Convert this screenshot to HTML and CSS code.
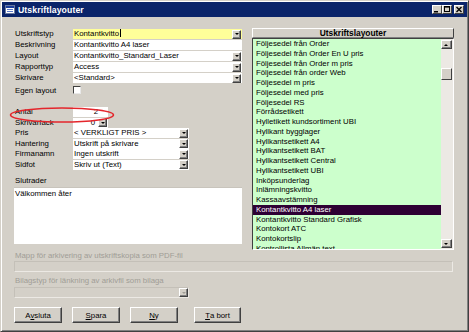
FILE: index.html
```html
<!DOCTYPE html>
<html lang="sv">
<head>
<meta charset="utf-8">
<title>Utskriftlayouter</title>
<link rel="stylesheet" href="styles.css">
</head>
<body>
<div class="window">
  <div class="titlebar">
    <svg class="app-icon" width="10" height="9" viewBox="0 0 10 9">
      <rect x="0.5" y="0.5" width="9" height="8" fill="#fff" stroke="#6a7aa0"/>
      <rect x="1" y="1" width="8" height="2" fill="#1c3f9c"/>
      <rect x="2" y="4" width="6" height="1" fill="#5a78c8"/>
      <rect x="2" y="6" width="6" height="1" fill="#5a78c8"/>
    </svg>
    <span class="title">Utskriftlayouter</span>
    <div class="caption-btns">
      <span class="cbtn"><svg width="8" height="7" viewBox="0 0 8 7"><rect x="1" y="5" width="4" height="1.5" fill="#000"/></svg></span>
      <span class="cbtn"><svg width="8" height="7" viewBox="0 0 8 7"><rect x="1.5" y="0.5" width="5" height="5" fill="none" stroke="#000"/><rect x="1" y="0" width="6" height="1.6" fill="#000"/></svg></span>
      <span class="cbtn close"><svg width="8" height="7" viewBox="0 0 8 7"><path d="M1.5 1 L6.5 6 M6.5 1 L1.5 6" stroke="#000" stroke-width="1.4"/></svg></span>
    </div>
  </div>

  <div class="client">
    <div class="top">
      <div class="left">
        <div class="group upper">
          <div class="row"><span class="label">Utskriftstyp</span><span class="field yellow"><span class="val">Kontantkvitto<span class="caret"></span></span><span class="dd"></span></span></div>
          <div class="row"><span class="label">Beskrivning</span><span class="field"><span class="val">Kontantkvitto A4 laser</span></span></div>
          <div class="row"><span class="label">Layout</span><span class="field"><span class="val">Kontantkvitto_Standard_Laser</span><span class="dd"></span></span></div>
          <div class="row"><span class="label">Rapporttyp</span><span class="field"><span class="val">Access</span><span class="dd"></span></span></div>
          <div class="row"><span class="label">Skrivare</span><span class="field"><span class="val">&lt;Standard&gt;</span><span class="dd"></span></span></div>
          <div class="row check-row"><span class="label">Egen layout</span><span class="checkbox"></span></div>
        </div>

        <div class="group lower">
          <div class="row"><span class="label">Antal</span><span class="field narrow num"><span class="val">2</span></span></div>
          <div class="row"><span class="label">Skrivarfack</span><span class="field narrow num combo-num"><span class="val">0</span><span class="dd"></span></span></div>
          <div class="row"><span class="label">Pris</span><span class="field medium"><span class="val">&lt; VERKLIGT PRIS &gt;</span><span class="dd"></span></span></div>
          <div class="row"><span class="label">Hantering</span><span class="field medium"><span class="val">Utskrift på skrivare</span><span class="dd"></span></span></div>
          <div class="row"><span class="label">Firmanamn</span><span class="field medium"><span class="val">Ingen utskrift</span><span class="dd"></span></span></div>
          <div class="row"><span class="label">Sidfot</span><span class="field medium"><span class="val">Skriv ut (Text)</span><span class="dd"></span></span></div>
        </div>

        <div class="slut-label">Slutrader</div>
        <div class="textarea">Välkommen åter</div>
      </div>

      <div class="right">
        <div class="list-header">Utskriftslayouter</div>
        <div class="list">
          <ul class="items">
            <li>Följesedel från Order</li>
            <li>Följesedel från Order En U pris</li>
            <li>Följesedel från Order m pris</li>
            <li>Följesedel från order Web</li>
            <li>Följesedel m pris</li>
            <li>Följesedel med pris</li>
            <li>Följesedel RS</li>
            <li>Förrådsetikett</li>
            <li>Hylletikett kundsortiment UBI</li>
            <li>Hyllkant bygglager</li>
            <li>Hyllkantsetikett A4</li>
            <li>Hyllkantsetikett BAT</li>
            <li>Hyllkantsetikett Central</li>
            <li>Hyllkantsetikett UBI</li>
            <li>Inköpsunderlag</li>
            <li>Inlämningskvitto</li>
            <li>Kassaavstämning</li>
            <li class="selected">Kontantkvitto A4 laser</li>
            <li>Kontantkvitto Standard Grafisk</li>
            <li>Kontokort ATC</li>
            <li>Kontokortslip</li>
            <li>Kontrollista Allmän text</li>
          </ul>
          <div class="scrollbar">
            <span class="sb-btn"><span class="tri up"></span></span>
            <span class="sb-track"><span class="sb-thumb"></span></span>
            <span class="sb-btn"><span class="tri"></span></span>
          </div>
        </div>
      </div>
    </div>

    <div class="dis-label first">Mapp för arkivering av utskriftskopia som PDF-fil</div>
    <div class="dis-field wide"></div>
    <div class="dis-label">Bilagstyp för länkning av arkivfil som bilaga</div>
    <div class="dis-field short"><span class="dd"></span></div>

    <div class="buttons">
      <span class="btn">A<u>v</u>sluta</span>
      <span class="btn"><u>S</u>para</span>
      <span class="btn"><u>N</u>y</span>
      <span class="btn last"><u>T</u>a bort</span>
    </div>
  </div>

  <svg class="highlight" width="108" height="18" viewBox="0 0 108 18">
    <ellipse cx="54" cy="9" rx="51.5" ry="7" fill="none" stroke="#e4262c" stroke-width="1.5"/>
  </svg>
</div>
</body>
</html>
```
FILE: styles.css
```css
html, body {
  margin: 0;
  padding: 0;
  background: #d4d0c8;
}

.window {
  position: relative;
  width: 469px;
  height: 332px;
  box-sizing: border-box;
  border: 1px solid;
  border-color: #d4d0c8 #404040 #404040 #d4d0c8;
  box-shadow: inset 1px 1px #ffffff, inset -1px -1px #808080;
  padding: 1px;
  background: #d4d0c8;
  display: flex;
  flex-direction: column;
  overflow: hidden;
  font-family: "Liberation Sans", Arial, sans-serif;
  font-size: 7.8px;
  color: #000;
}

/* Title bar */
.titlebar {
  height: 15px;
  flex: none;
  background: #0a246a;
  display: flex;
  align-items: center;
  padding: 0 2px 0 2px;
  color: #fff;
}
.app-icon {
  margin-left: 1px;
  margin-right: 3px;
  flex: none;
}
.title {
  font-weight: bold;
  font-size: 8.7px;
  letter-spacing: 0.1px;
}
.caption-btns {
  margin-left: auto;
  display: flex;
  margin-right: 1px;
}
.cbtn {
  width: 10px;
  height: 9px;
  box-sizing: border-box;
  background: #d4d0c8;
  border: 1px solid;
  border-color: #fff #404040 #404040 #fff;
  display: flex;
  align-items: center;
  justify-content: center;
}
.cbtn svg { display: block; }
.cbtn.close { margin-left: 2px; }

/* Client */
.client {
  flex: 1;
  padding: 11px 0 0 12px;
  display: flex;
  flex-direction: column;
}
.top {
  display: flex;
  gap: 10px;
  height: 222px;
}

.left {
  width: 228px;
  padding-top: 1px;
  display: flex;
  flex-direction: column;
}

.row {
  display: flex;
  align-items: center;
  height: 10px;
  line-height: 10px;
}
.upper .row { margin-bottom: 1px; }
.upper .check-row { margin-top: 3px; }
.lower { margin-top: 10px; }
.lower .row { margin-bottom: 0.5px; }

.label {
  width: 58px;
  padding-left: 1px;
  flex: none;
  white-space: nowrap;
}

.field {
  flex: none;
  width: 169px;
  height: 10px;
  box-sizing: border-box;
  background: #fff;
  display: flex;
  align-items: center;
  padding-left: 1px;
  white-space: nowrap;
  overflow: hidden;
}
.field.yellow { background: #ffff99; }
.field .val { flex: 1; }
.field.narrow { width: 35px; }
.field.medium { width: 116px; }
.field.num .val { text-align: right; padding-right: 10px; }
.field.combo-num .val { padding-right: 3px; }

.caret {
  display: inline-block;
  width: 1px;
  height: 8px;
  background: #000;
  vertical-align: -1px;
  margin-left: 0.5px;
}

.dd {
  flex: none;
  position: relative;
  width: 9px;
  height: 9px;
  box-sizing: border-box;
  background: #d4d0c8;
  border: 1px solid;
  border-color: #fff #404040 #404040 #fff;
  box-shadow: inset -1px -1px #808080;
  margin-right: 1px;
}
.dd::after {
  content: "";
  position: absolute;
  left: 1.5px;
  top: 2.5px;
  border-left: 2.5px solid transparent;
  border-right: 2.5px solid transparent;
  border-top: 2.5px solid #000;
}

.checkbox {
  width: 8px;
  height: 8px;
  box-sizing: border-box;
  background: #fff;
  border: 1px solid;
  border-color: #404040 #e8e8e8 #e8e8e8 #404040;
  margin-top: -2px;
}

.slut-label {
  margin-top: 5.5px;
  height: 10px;
  line-height: 10px;
  padding-left: 1px;
}
.textarea {
  margin-top: 1px;
  width: 228px;
  height: 57px;
  box-sizing: border-box;
  background: #fff;
  border-top: 1px solid #c8c4bc;
  padding: 1px 1px;
  line-height: 9px;
}

/* Right list */
.right {
  width: 202px;
  display: flex;
  flex-direction: column;
}
.list-header {
  height: 10px;
  box-sizing: border-box;
  background: #d4d0c8;
  border: 1px solid;
  border-color: #fff #404040 #808080 #fff;
  font-weight: bold;
  font-size: 8.4px;
  line-height: 8px;
  text-align: center;
}
.list {
  height: 212px;
  width: 202px;
  box-sizing: border-box;
  border: 1px solid;
  border-color: #404040 #fff #fff #404040;
  background: #ccffcc;
  display: flex;
  overflow: hidden;
}
.items {
  list-style: none;
  margin: 0;
  padding: 0;
  flex: 1;
  overflow: hidden;
}
.items li {
  height: 9.76px;
  line-height: 9.76px;
  padding-left: 3px;
  white-space: nowrap;
}
.items li.selected {
  background: #2e0034;
  color: #fff;
}

.scrollbar {
  width: 11px;
  flex: none;
  display: flex;
  flex-direction: column;
  background: #ece9e4;
  padding: 1px 1px 1px 0;
}
.sb-btn {
  height: 9px;
  flex: none;
  box-sizing: border-box;
  background: #d4d0c8;
  border: 1px solid;
  border-color: #fff #404040 #404040 #fff;
  box-shadow: inset -1px -1px #808080;
  position: relative;
}
.tri {
  position: absolute;
  left: 2px;
  top: 2.5px;
  border-left: 2.5px solid transparent;
  border-right: 2.5px solid transparent;
  border-top: 2.5px solid #000;
}
.tri.up {
  border-top: 0;
  border-bottom: 2.5px solid #000;
}
.sb-track {
  flex: 1;
  position: relative;
}
.sb-thumb {
  position: absolute;
  left: 0;
  right: 0;
  top: 19px;
  height: 12px;
  box-sizing: border-box;
  background: #d4d0c8;
  border: 1px solid;
  border-color: #fff #404040 #404040 #fff;
}

/* Disabled section */
.dis-label {
  height: 10px;
  line-height: 10px;
  color: #a09d96;
  margin-top: 4px;
  padding-left: 1px;
}
.dis-label.first { margin-top: 1px; }
.dis-field {
  margin-top: 0;
  height: 11px;
  box-sizing: border-box;
  border: 1px solid;
  border-color: #c4c0b8 #ece9e4 #ece9e4 #c4c0b8;
  display: flex;
  justify-content: flex-end;
  align-items: center;
}
.dis-field.wide { width: 439px; }
.dis-field.short { width: 175px; margin-top: 1px; }
.dis-field .dd { height: 9px; margin-right: 0; }
.dis-field .dd::after { border-top-color: #a09d96; }

/* Buttons */
.buttons {
  display: flex;
  margin-top: 9px;
}
.btn {
  width: 48px;
  height: 16px;
  box-sizing: border-box;
  background: #d4d0c8;
  border: 1px solid;
  border-color: #fff #404040 #404040 #fff;
  box-shadow: inset -1px -1px #808080;
  display: flex;
  align-items: center;
  justify-content: center;
  margin-right: 10px;
}
.btn.last {
  margin-left: 6px;
  width: 47px;
}

/* Annotation overlay */
.highlight {
  position: absolute;
  left: 7px;
  top: 105px;
}
```
